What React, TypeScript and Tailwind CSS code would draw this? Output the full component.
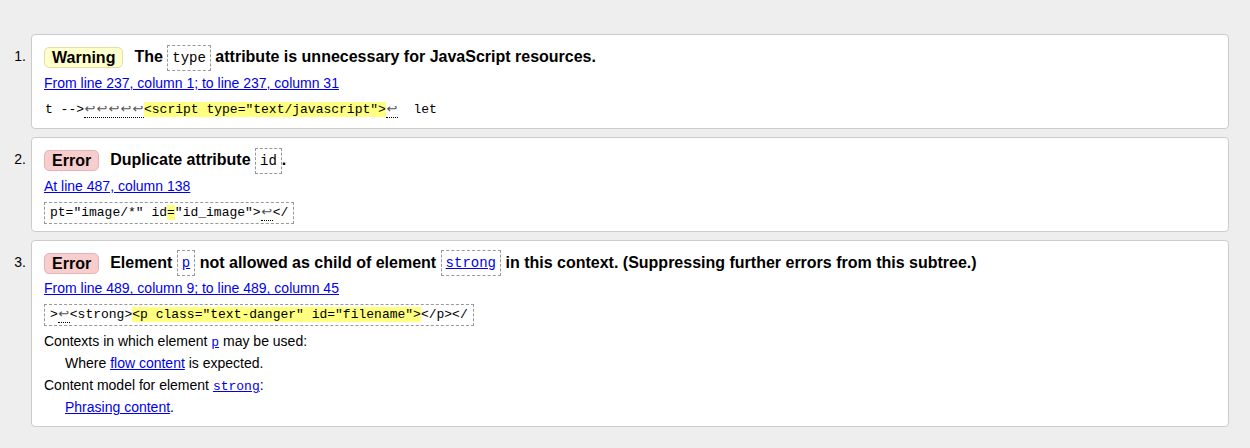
import React from 'react';

const sans = "font-['Liberation_Sans',Arial,sans-serif]";
const mono = "font-['Liberation_Mono','DejaVu_Sans_Mono',monospace]";

const Code = ({ children, link }: { children: React.ReactNode; link?: boolean }) => (
  <code
    className={`${mono} inline-block border border-dashed border-[#999] px-[4px] text-[14px] font-normal leading-[24px] align-middle ${
      link ? 'text-[#0000ee] underline' : 'text-black'
    }`}
  >
    {children}
  </code>
);

const Badge = ({ kind }: { kind: 'Warning' | 'Error' }) => (
  <span
    className={`inline-block rounded-[5px] border px-[7px] leading-[19px] mr-[11px] align-middle ${
      kind === 'Warning'
        ? 'bg-[#ffffcc] border-[#e2e0a8]'
        : 'bg-[#f8cdcd] border-[#e3b5b5]'
    }`}
  >
    {kind}
  </span>
);

// the return-arrow glyphs render wider than the monospace text in the validator
const Returns = ({ n }: { n: number }) => (
  <span className="border-b border-dotted border-black">
    {Array.from({ length: n }).map((_, i) => (
      <span key={i} className="inline-block w-[12px] text-center font-['DejaVu_Sans',sans-serif] text-[#555] leading-[16px]">
        {'\u21a9'}
      </span>
    ))}
  </span>
);

const Hl = ({ children }: { children: React.ReactNode }) => (
  <span className="bg-[#ffff80]">{children}</span>
);

const Link = ({ children }: { children: React.ReactNode }) => (
  <a href="#" className="text-[#0000ee] underline">
    {children}
  </a>
);

type Msg = {
  n: number;
  title: React.ReactNode;
  location: string;
  extract: React.ReactNode;
  boxed: boolean;
  extra?: React.ReactNode;
};

const messages: Msg[] = [
  {
    n: 1,
    title: (
      <>
        <Badge kind="Warning" />
        The <Code>type</Code> attribute is unnecessary for JavaScript resources.
      </>
    ),
    location: 'From line 237, column 1; to line 237, column 31',
    extract: (
      <>
        t --&gt;<Returns n={5} />
        <Hl>&lt;script type="text/javascript"&gt;</Hl>
        <Returns n={1} />
        {'  let'}
      </>
    ),
    boxed: false,
  },
  {
    n: 2,
    title: (
      <>
        <Badge kind="Error" />
        Duplicate attribute <Code>id</Code>.
      </>
    ),
    location: 'At line 487, column 138',
    extract: (
      <>
        pt="image/*" id<Hl>=</Hl>"id_image"&gt;<Returns n={1} />&lt;/
      </>
    ),
    boxed: true,
  },
  {
    n: 3,
    title: (
      <>
        <Badge kind="Error" />
        Element <Code link>p</Code> not allowed as child of element <Code link>strong</Code> in this
        context. (Suppressing further errors from this subtree.)
      </>
    ),
    location: 'From line 489, column 9; to line 489, column 45',
    extract: (
      <>
        &gt;<Returns n={1} />&lt;strong&gt;<Hl>&lt;p class="text-danger" id="filename"&gt;</Hl>
        &lt;/p&gt;&lt;/
      </>
    ),
    boxed: true,
    extra: (
      <div className="mt-[4px] pb-[1px] text-[14px] leading-[22px] text-black">
        <div>
          Contexts in which element{' '}
          <a href="#" className={`${mono} text-[13px] leading-none text-[#0000ee] underline`}>
            p
          </a>{' '}
          may be used:
        </div>
        <div className="pl-[21px]">
          Where <Link>flow content</Link> is expected.
        </div>
        <div>
          Content model for element{' '}
          <a href="#" className={`${mono} text-[13px] leading-none text-[#0000ee] underline`}>
            strong
          </a>
          :
        </div>
        <div className="pl-[21px]">
          <Link>Phrasing content</Link>.
        </div>
      </div>
    ),
  },
];

export default function App() {
  return (
    <div className={`${sans} min-h-[448px] bg-[#eeeeee] pt-[34px] pr-[21px] text-black`}>
      <div className="flex flex-col gap-[8px]">
        {messages.map((m) => (
          <div key={m.n} className="flex items-start">
            <div className="w-[31px] shrink-0 pr-[5px] pt-[12px] text-right text-[14px] leading-[20px]">
              {m.n}.
            </div>
            <div className="flex-1 rounded-[4px] border border-[#cccccc] bg-white pl-[12px] pr-3 pt-[8px] pb-[7px]">
              <div className="text-[16px] font-bold leading-[27px]">{m.title}</div>
              <div className="mt-[1px] text-[14px] leading-[22px]">
                <Link>{m.location}</Link>
              </div>
              <div className="mt-[2px]">
                <code
                  className={`${mono} inline-block whitespace-pre text-[13px] leading-[20px] ${
                    m.boxed ? 'border border-dashed border-[#999] px-[5px]' : 'border border-transparent'
                  }`}
                >
                  {m.extract}
                </code>
              </div>
              {m.extra}
            </div>
          </div>
        ))}
      </div>
    </div>
  );
}
